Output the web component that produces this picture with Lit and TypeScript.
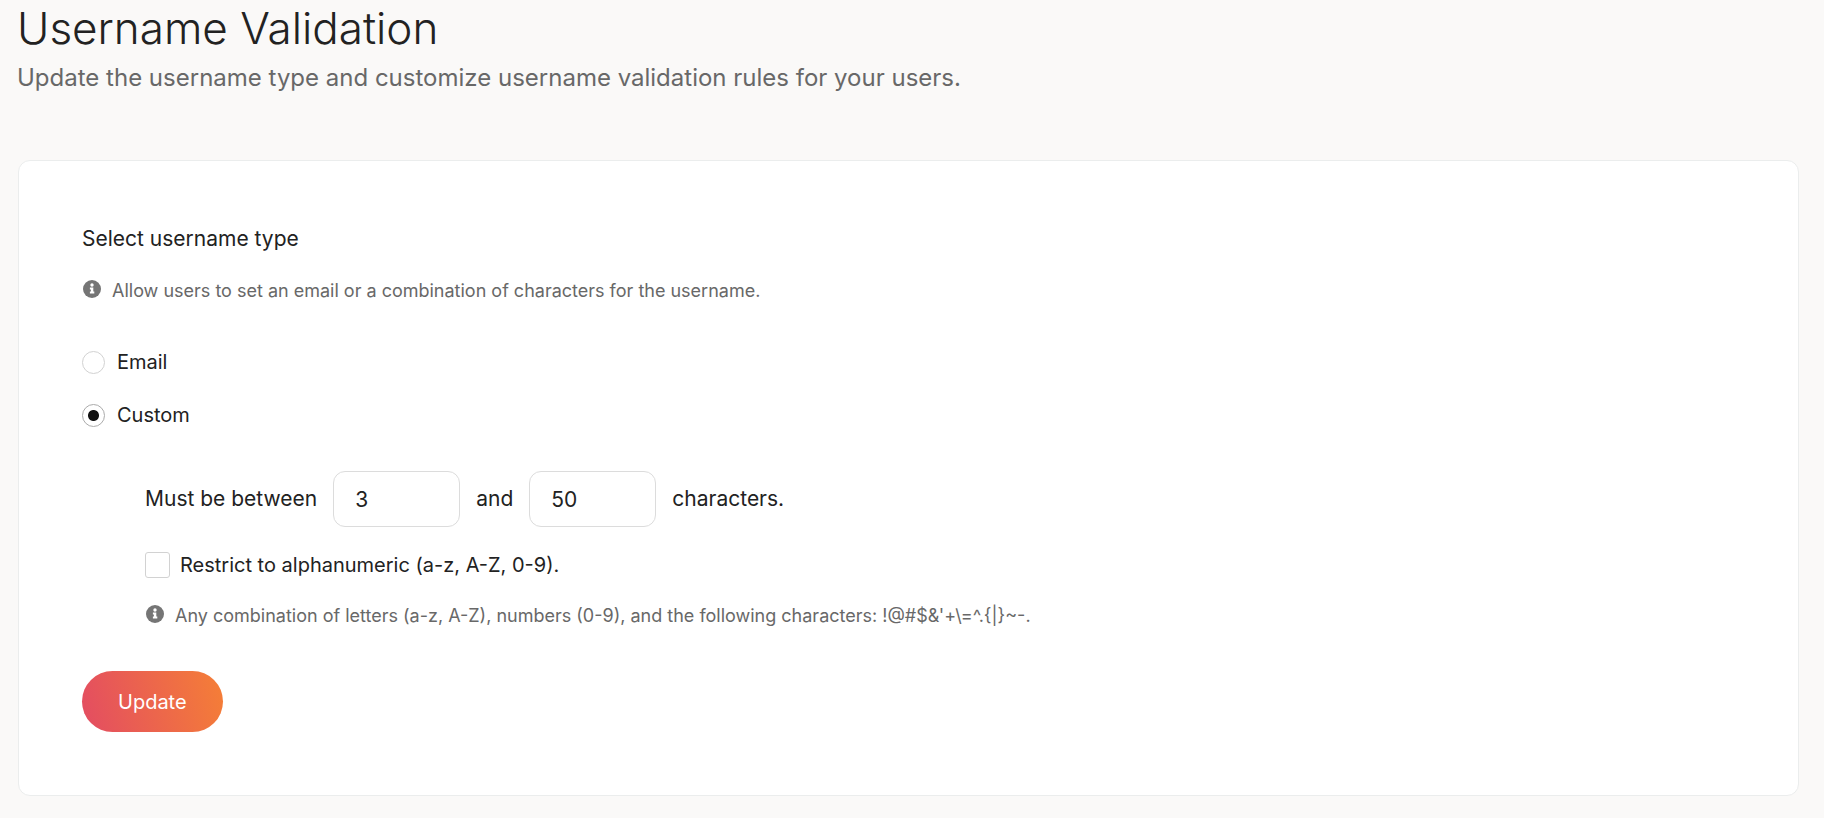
import { LitElement, html, css, svg } from "lit";
import { customElement, state } from "lit/decorators.js";

type UsernameType = "email" | "custom";

const infoIcon = html`
  <svg class="info" viewBox="0 0 18 18" aria-hidden="true">
    ${svg`<circle cx="9" cy="9" r="9" fill="#757575"></circle>
    <circle cx="9" cy="5" r="1.7" fill="#fff"></circle>
    <path d="M6.9 7.6h3.4v4h1v1.8H6.9v-1.8h1V9.4h-1z" fill="#fff"></path>`}
  </svg>
`;

@customElement("app-root")
export class AppRoot extends LitElement {
  @state() private type: UsernameType = "custom";

  static styles = css`
    :host {
      display: block;
      box-sizing: border-box;
      min-height: 100vh;
      padding: 4px 25px 16px 17px;
      background: #faf9f8;
      color: #222;
      font-family: Inter, "Open Sans", sans-serif;
      font-size: 20px;
      font-weight: 400;
      line-height: 28px;
    }
    * {
      box-sizing: border-box;
    }
    h1,
    h2,
    p {
      margin: 0;
      font-weight: inherit;
    }
    h1 {
      font-size: 44px;
      font-weight: 300;
      line-height: 48px;
    }
    .subtitle {
      margin: 10px 0 66px;
      color: #686868;
      font-size: 24px;
      line-height: 32px;
    }
    .card {
      display: flex;
      flex-direction: column;
      align-items: flex-start;
      margin-left: 1px;
      padding: 64px 63px 63px;
      border: 1px solid #ebeded;
      border-radius: 12px;
      background: #fff;
    }
    h2 {
      margin-bottom: 25px;
      font-size: 21px;
    }
    .hint {
      display: flex;
      align-items: flex-start;
      gap: 11px;
      color: #686868;
      font-size: 18px;
      line-height: 26px;
    }
    .info {
      flex: none;
      width: 18px;
      height: 18px;
      margin: 2px 0 0 1px;
    }
    .types {
      display: flex;
      flex-direction: column;
      align-items: flex-start;
      gap: 25px;
      margin: 44px 0 42px;
      padding: 0;
      border: 0;
    }
    .option {
      display: flex;
      align-items: center;
      gap: 12px;
    }
    .option input,
    .check input {
      flex: none;
      margin: 0;
      appearance: none;
      border: 1px solid #d2d2d2;
      background: #fff;
    }
    .option input {
      width: 23px;
      height: 23px;
      border-radius: 50%;
    }
    .option input:checked {
      border-color: #ababab;
      background: radial-gradient(circle, #111 5px, transparent 6px);
    }
    .rules {
      display: flex;
      flex-direction: column;
      gap: 25px;
      margin: 0 0 42px 63px;
    }
    .length {
      display: flex;
      flex-wrap: wrap;
      align-items: center;
      gap: 16px;
      font-size: 21px;
    }
    .length input {
      width: 127px;
      height: 56px;
      padding: 0 21px;
      border: 1px solid #dcdcdc;
      border-radius: 12px;
      background: #fff;
      color: inherit;
      font: inherit;
    }
    .check {
      display: flex;
      align-items: center;
      gap: 10px;
      line-height: 26px;
    }
    .check input {
      width: 25px;
      height: 26px;
      border-radius: 3px;
    }
    button {
      padding: 17px 36px 16px;
      border: 0;
      border-radius: 31px;
      background: linear-gradient(75deg, #e34c62, #f57f36);
      color: #fff;
      font: inherit;
    }
  `;

  private option(value: UsernameType, label: string) {
    return html`
      <label class="option">
        <input
          type="radio"
          name="type"
          .checked=${this.type === value}
          @change=${() => (this.type = value)}
        />
        <span>${label}</span>
      </label>
    `;
  }

  private get rules() {
    return html`
      <div class="rules">
        <div class="length">
          <label for="min">Must be between</label>
          <input id="min" type="text" inputmode="numeric" value="3" />
          <label for="max">and</label>
          <input id="max" type="text" inputmode="numeric" value="50" />
          <span>characters.</span>
        </div>
        <label class="check">
          <input type="checkbox" />
          <span>Restrict to alphanumeric (a-z, A-Z, 0-9).</span>
        </label>
        <p class="hint">
          ${infoIcon}
          <span>Any combination of letters (a-z, A-Z), numbers (0-9), and the following characters: ${"!@#$&'+\\=^.{|}~-."}</span>
        </p>
      </div>
    `;
  }

  render() {
    return html`
      <main>
        <h1>Username Validation</h1>
        <p class="subtitle">Update the username type and customize username validation rules for your users.</p>
        <section class="card">
          <h2 id="type-title">Select username type</h2>
          <p class="hint">
            ${infoIcon}
            <span>Allow users to set an email or a combination of characters for the username.</span>
          </p>
          <fieldset class="types" aria-labelledby="type-title">
            ${this.option("email", "Email")} ${this.option("custom", "Custom")}
          </fieldset>
          ${this.type === "custom" ? this.rules : null}
          <button type="button">Update</button>
        </section>
      </main>
    `;
  }
}
